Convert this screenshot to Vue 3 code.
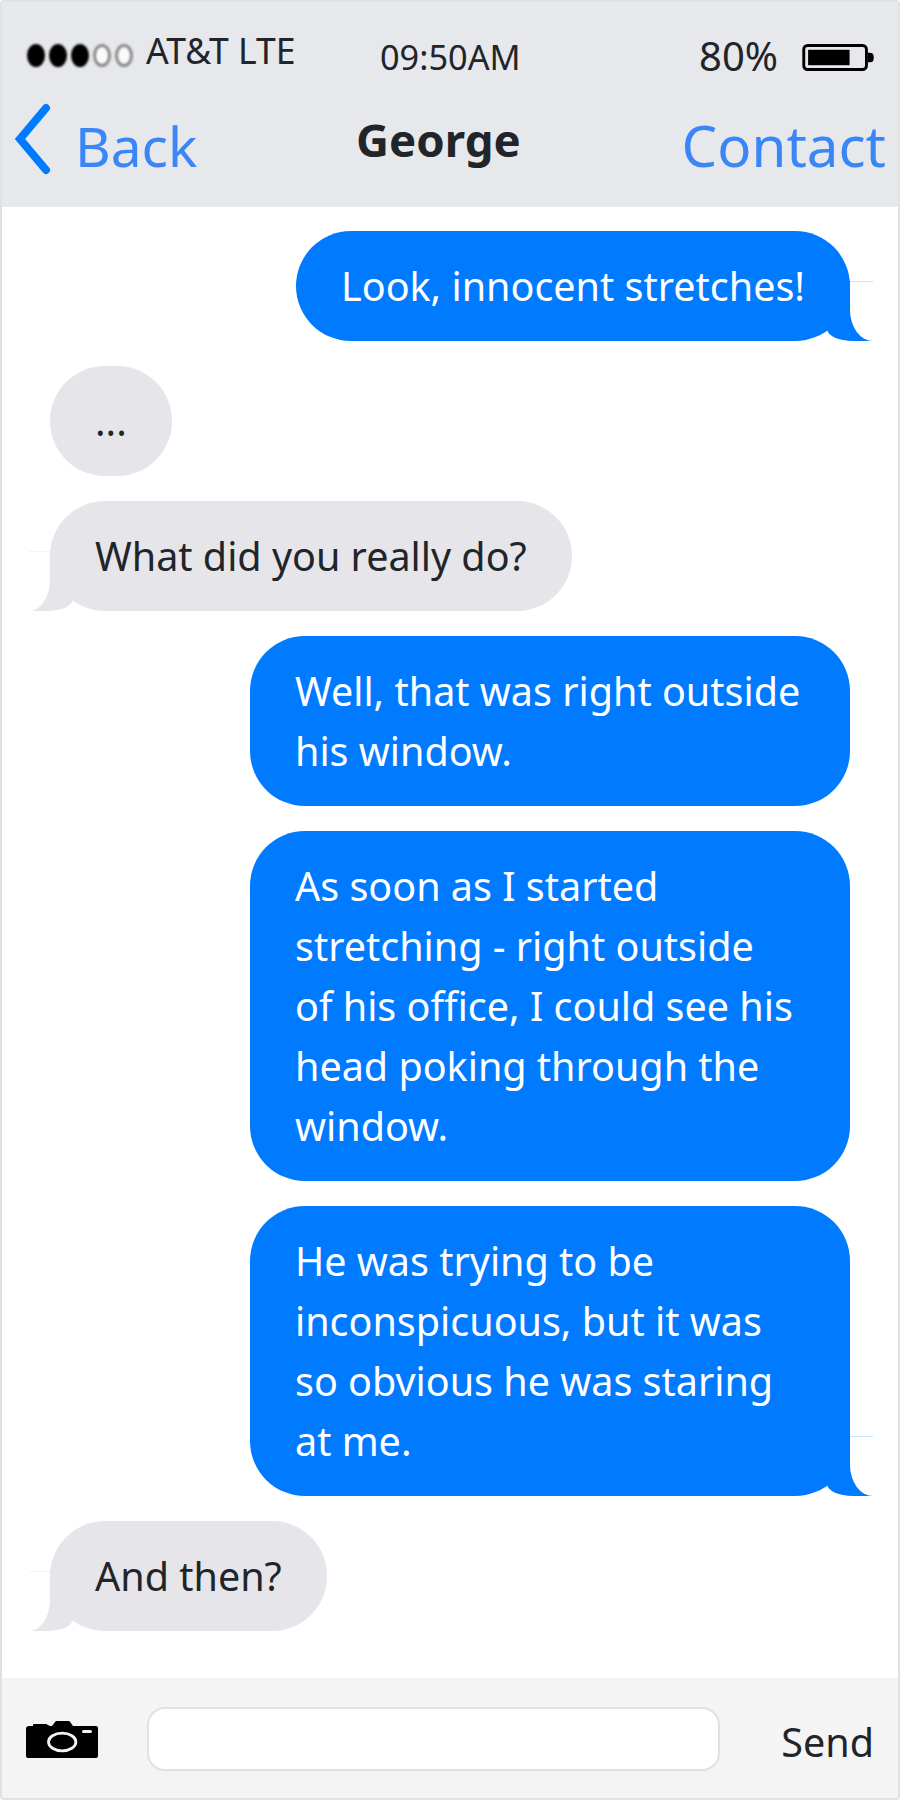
<template>
  <div class="phone">
    <header class="topbar">
      <div class="status">
        <div class="status__carrier">
          <span class="signal">
            <i v-for="n in 5" :key="n" class="signal__dot" :class="{ 'signal__dot--on': n <= 3 }"></i>
          </span>
          <span class="status__name">AT&amp;T LTE</span>
        </div>
        <div class="status__time">09:50AM</div>
        <div class="status__battery">
          <span class="status__pct">80%</span>
          <svg class="battery" viewBox="0 0 74 28">
            <rect x="1.5" y="1.5" width="65" height="25" rx="4" fill="none" stroke="#000" stroke-width="3"/>
            <rect x="6" y="6" width="43" height="16" fill="#000"/>
            <path d="M68 9h2a4 4 0 0 1 4 4v2a4 4 0 0 1-4 4h-2z" fill="#000"/>
          </svg>
        </div>
      </div>
      <nav class="nav">
        <a class="nav__back">
          <svg class="chevron" viewBox="0 0 38 72">
            <path d="M32 5 6 36l26 31"/>
          </svg>
          <span>Back</span>
        </a>
        <strong class="nav__title">George</strong>
        <a class="nav__contact">Contact</a>
      </nav>
    </header>

    <main class="messages">
      <div
        v-for="msg in mensagens"
        :key="msg.id"
        class="bubble"
        :class="[msg.me ? 'bubble--me' : 'bubble--them', { 'bubble--tail': msg.tail }]"
      >{{ msg.texto }}</div>
    </main>

    <footer class="composer">
      <svg class="camera" viewBox="0 0 72 37">
        <path d="M3 5h4V4a1 1 0 0 1 1-1h12a2 2 0 0 1 1.500.700L24 5h2l3-4a2 2 0 0 1 1.500-1h12a2 2 0 0 1 1.500.800L47 5h23a2 2 0 0 1 2 2v28a2 2 0 0 1-2 2H2a2 2 0 0 1-2-2V8a3 3 0 0 1 3-3z" fill="#000"/>
        <ellipse cx="36.200" cy="21" rx="13.700" ry="8.800" fill="none" stroke="#f4f4f5" stroke-width="2.800"/>
        <rect x="56" y="9" width="10" height="3" rx="1.500" fill="#f4f4f5"/>
      </svg>
      <input class="composer__input" type="text" />
      <span class="composer__send">Send</span>
    </footer>
  </div>
</template>

<script setup>
const mensagens = [
  { id: 1, me: true, tail: true, texto: 'Look, innocent stretches!' },
  { id: 2, me: false, tail: false, texto: '...' },
  { id: 3, me: false, tail: true, texto: 'What did you really do?' },
  { id: 4, me: true, tail: false, texto: 'Well, that was right outside his window.' },
  { id: 5, me: true, tail: false, texto: 'As soon as I started stretching - right outside of\u00a0his office, I could see his head poking through the window.' },
  { id: 6, me: true, tail: true, texto: 'He was trying to be inconspicuous, but it was so obvious he was staring at\u00a0me.' },
  { id: 7, me: false, tail: true, texto: 'And then?' }
]
</script>

<style>
html, body { margin: 0; background: #fff; }
</style>

<style scoped>
.phone { width: 900px; height: 1800px; box-sizing: border-box; border: 2px solid #dee2e6; border-radius: 4px; display: flex; flex-direction: column; background: #fff; color: #212529; font-family: "Noto Sans", "Open Sans", sans-serif; overflow: hidden; }

/* ===== Topbar ===== */
.topbar { height: 205px; background: #e6e8ec; flex: none; box-sizing: border-box; padding-top: 28px; }
.status { display: grid; grid-template-columns: 345px 1fr auto; align-items: center; height: 50px; padding-right: 24px; }
.status__carrier { display: flex; align-items: center; gap: 13px; padding-left: 25px; font-size: 35.5px; margin-top: -4px; }
.status__name { position: relative; top: -6px; }
.signal { display: flex; gap: 4px; filter: blur(0.8px); }
.signal__dot { width: 18px; height: 23px; box-sizing: border-box; border-radius: 50%; border: 3px solid #8a8a8a; background: #fafafa; }
.signal__dot--on { background: #000; border-color: #000; }
.status__time { font-size: 34.3px; padding-left: 33px; position: relative; top: -1px; }
.status__battery { display: flex; align-items: center; gap: 24px; font-size: 40px; }
.status__pct { position: relative; top: -2px; }
.battery { width: 72px; height: 27px; flex: none; }

.nav { display: grid; grid-template-columns: 260px 1fr 300px; align-items: center; height: 90px; margin-top: 14px; }
.nav__back { display: flex; align-items: center; gap: 23px; padding-left: 12px; color: #3b86f7; font-size: 55px; }
.nav__back span { position: relative; top: 6px; }
.chevron { width: 38px; height: 72px; flex: none; fill: none; stroke: #007bff; stroke-width: 8; stroke-linecap: round; }
.nav__title { font-size: 45.6px; font-weight: 700; padding-left: 94px; }
.nav__contact { color: #3b86f7; font-size: 56.5px; text-align: right; padding-right: 12px; position: relative; top: 6px; }

/* ===== Messages ===== */
.messages { flex: 1; display: flex; flex-direction: column; gap: 25px; padding: 24px 48px 0 48px; }
.bubble { position: relative; max-width: 600px; box-sizing: border-box; padding: 25px 45px; border-radius: 55px; font-size: 39.5px; line-height: 60px; }
.bubble--me { align-self: flex-end; background: #007bff; color: #fff; }
.bubble--them { align-self: flex-start; background: #e5e5ea; color: #212529; }

/* cola da bolha */
.bubble--tail::before, .bubble--tail::after { content: ""; position: absolute; bottom: 0; }
.bubble--me.bubble--tail::before { right: -23px; height: 60px; border-right: 46px solid #007bff; border-bottom-left-radius: 26px 12px; }
.bubble--me.bubble--tail::after { right: -23px; width: 23px; height: 60px; box-sizing: border-box; background: #fff; border-top: 1px solid #cfe4fb; border-bottom-left-radius: 23px 31px; }
.bubble--them.bubble--tail::before { left: -21px; height: 60px; border-left: 44px solid #e5e5ea; border-bottom-right-radius: 26px 12px; }
.bubble--them.bubble--tail::after { left: -21px; width: 21px; height: 60px; box-sizing: border-box; background: #fff; border-top: 1px solid #f4f4f6; border-bottom-right-radius: 21px 31px; }

/* ===== Composer ===== */
.composer { height: 120px; flex: none; background: #f4f4f5; display: flex; align-items: center; padding: 0 24px 0 24px; box-sizing: border-box; }
.camera { width: 72px; height: 37px; flex: none; margin-top: 3px; }
.composer__input { width: 573px; height: 64px; box-sizing: border-box; margin: 2px 0 0 49px; border: 2px solid #dee2e6; border-radius: 18px; background: #fff; outline: none; }
.composer__send { margin-left: auto; font-size: 39.5px; margin-top: 8px; }
</style>
